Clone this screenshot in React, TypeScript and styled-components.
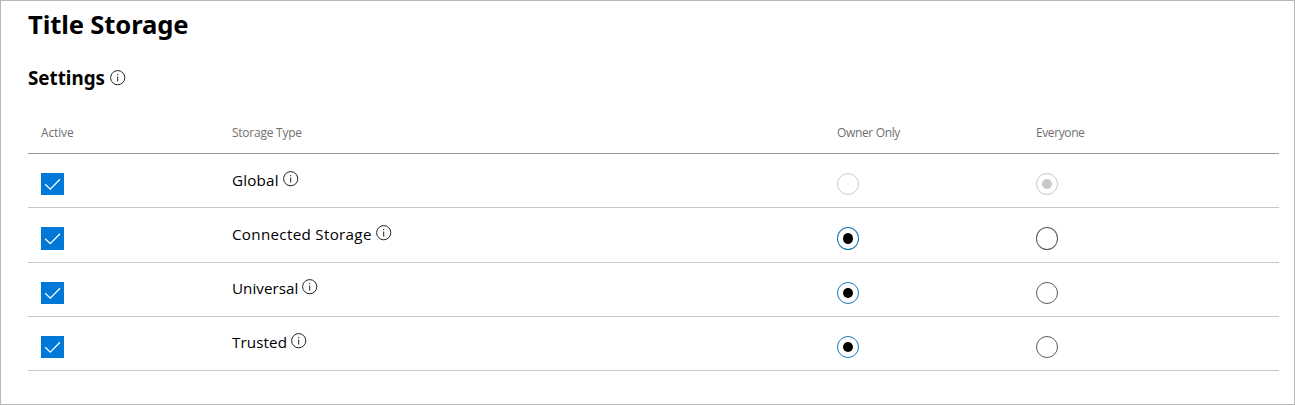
import React from 'react';
import styled, { createGlobalStyle } from 'styled-components';

const Global = createGlobalStyle`
  *{box-sizing:border-box}
  body{margin:0;background:#fff;font-family:"Open Sans","Noto Sans",sans-serif;color:#000}
`;
const Page = styled.main`
  height:405px;border:1px solid #b9b9b9;padding:0 15px 0 27px;overflow:hidden;
`;
const Title = styled.h1`
  margin:4px 0 0;height:40px;font:700 25.6px/40px "Noto Sans",sans-serif;letter-spacing:-0.12px;
`;
const Heading = styled.h2`
  margin:18px 0 0;height:30px;display:flex;align-items:center;gap:5px;
  font:700 18.8px/30px "Noto Sans",sans-serif;
  svg{margin-top:-1px}
`;
const HeadingText = styled.span`
  width:77px;white-space:nowrap;
`;
const Grid = styled.div`
  display:grid;grid-template-columns:191px 605px 199px 1fr;padding-left:13px;
`;
const Head = styled(Grid)`
  margin-top:19px;height:42px;border-bottom:1px solid #999;
  font-size:12px;line-height:42px;color:#707070;
`;
const HeadCell = styled.span<{ $spacing: number }>`
  letter-spacing:${p => p.$spacing}px;
`;
const Row = styled(Grid)<{ $h: number }>`
  height:${p => p.$h}px;border-bottom:1px solid #c8c8c8;
`;
const Label = styled.div<{ $top: number }>`
  display:flex;gap:4px;font-size:15.2px;line-height:20px;padding-top:${p => p.$top}px;
  svg{margin-top:1px}
`;
const Name = styled.span<{ $w: number; $spacing: number }>`
  width:${p => p.$w}px;white-space:nowrap;letter-spacing:${p => p.$spacing}px;
`;
const Check = styled.div<{ $h: number }>`
  width:23px;height:${p => p.$h}px;margin-top:19px;background:#0078d7;
  svg{display:block}
`;
const Radio = styled.div<{ $h: number; $on?: boolean; $off?: boolean }>`
  width:22px;height:${p => p.$h}px;margin-top:19px;border-radius:50%;
  border:1px solid ${p => (p.$off ? '#c8c8c8' : p.$on ? '#1a78b4' : '#5c5c5c')};
  display:flex;align-items:center;justify-content:center;
  &::after{content:"";width:10px;height:${p => p.$h - 12}px;border-radius:50%;
    background:${p => (!p.$on ? 'transparent' : p.$off ? '#c8c8c8' : '#000')};}
`;
const Info = () => (
  <svg width="16" height="16" viewBox="0 0 16 16" fill="none" stroke="#222">
    <circle cx="7.7" cy="7.7" r="7.1" /><path d="M7.7 6.5v5M7.7 4v1.2" />
  </svg>
);
const columns = [
  { title: 'Active', spacing: -0.15 },
  { title: 'Storage Type', spacing: -0.25 },
  { title: 'Owner Only', spacing: -0.35 },
  { title: 'Everyone', spacing: -0.4 },
];
const rows = [
  { name: 'Global', w: 47, spacing: 0.2, top: 16, h: 54, box: 22, off: true },
  { name: 'Connected Storage', w: 140, spacing: 0.3, top: 16, h: 55, box: 23 },
  { name: 'Universal', w: 66, spacing: 0.02, top: 15, h: 54, box: 22 },
  { name: 'Trusted', w: 55, spacing: 0.1, top: 15, h: 54, box: 22 },
];
export default function App() {
  return (
    <>
      <Global />
      <Page>
        <Title>Title Storage</Title>
        <Heading><HeadingText>Settings</HeadingText><Info /></Heading>
        <Head>
          {columns.map(c => <HeadCell key={c.title} $spacing={c.spacing}>{c.title}</HeadCell>)}
        </Head>
        {rows.map(r => (
          <Row key={r.name} $h={r.h}>
            <Check $h={r.box}>
              <svg width="23" height={r.box} viewBox="0 0 23 22" fill="none" stroke="#fff" strokeWidth="1.3">
                <path d="M4.2 11.2l5.1 5L19 6.3" />
              </svg>
            </Check>
            <Label $top={r.top}>
              <Name $w={r.w} $spacing={r.spacing}>{r.name}</Name><Info />
            </Label>
            <Radio $h={r.box} $on={!r.off} $off={r.off} />
            <Radio $h={r.box} $on={r.off} $off={r.off} />
          </Row>
        ))}
      </Page>
    </>
  );
}
